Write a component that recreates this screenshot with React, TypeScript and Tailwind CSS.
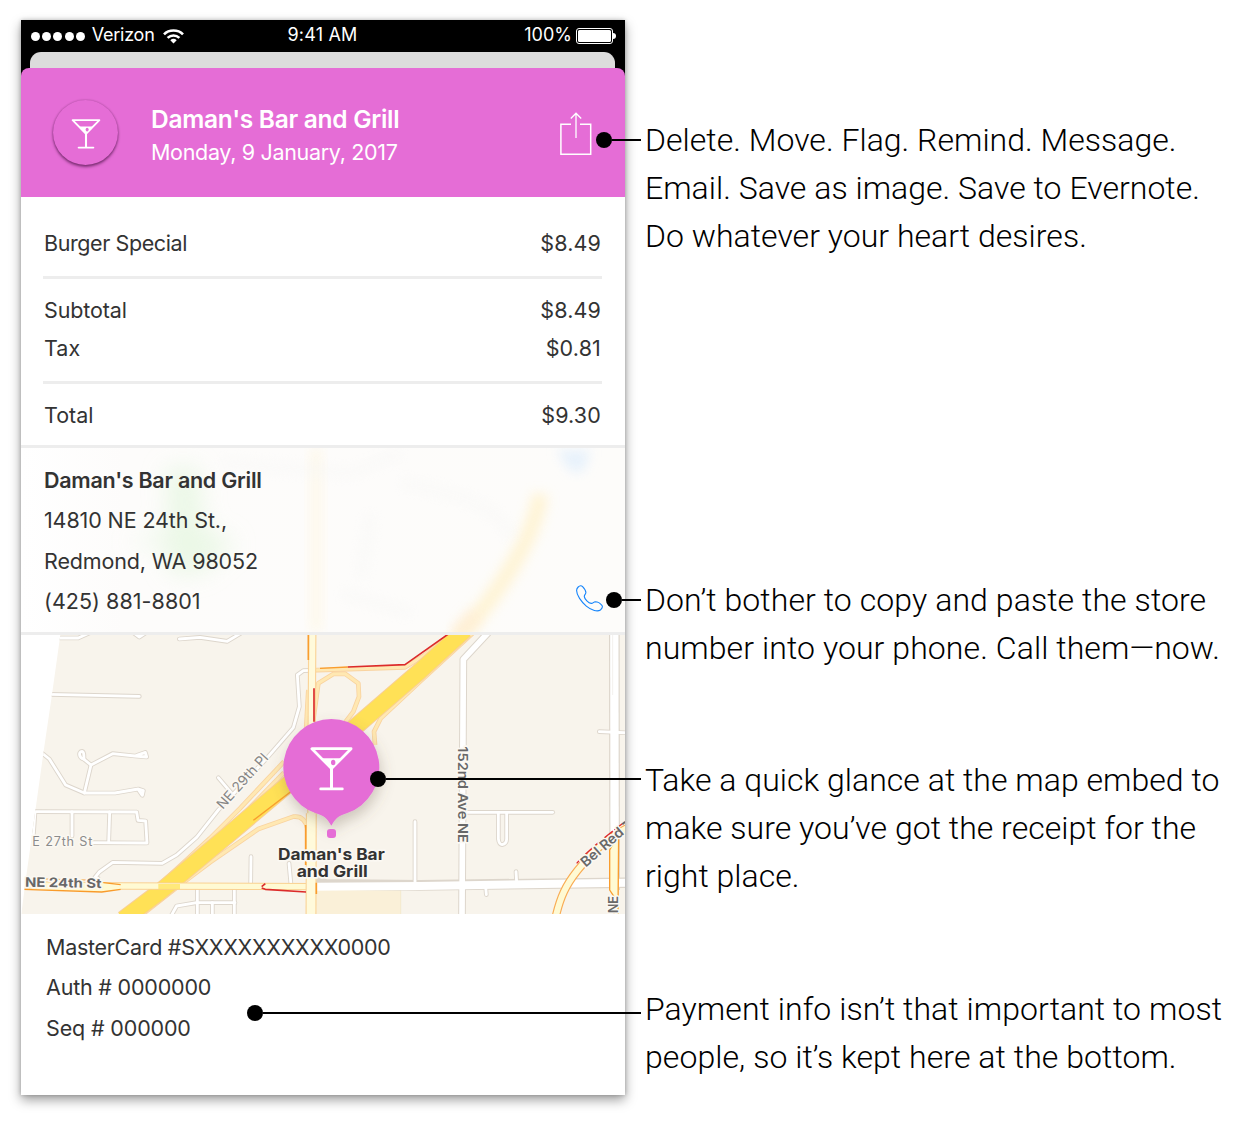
import React from 'react';

const minorRoads = [
  'M140,24 L205,24 L240,8',
  'M370,8 L388,21 L408,8',
  'M508,27 L570,22 L652,34 L695,8',
  'M120,193 L388,199',
  'M92,366 L118,387 L167,465 L223,489 L315,489 L385,477 L400,482 L397,496 L385,479',
  'M223,489 L243,405 L308,371 L375,378 L410,381 L406,367 L380,376',
  'M243,405 L221,387',
  'M221,387 C206,384 205,364 216,364 C224,366 221,378 222,387',
  'M70,545 L380,546 L384,571 L407,573 L411,639 L240,638',
  'M186,546 L186,618',
  'M299,546 L296,638',
  'M75,545 L70,615',
  'M264,745 L255,742 L268,726 L308,697 L457,700 L500,675 L560,622 L625,540 L770,385 L850,293 L868,230 L862,135 L880,122 L905,121',
  'M625,443 L665,490',
  'M482,860 L500,828 L560,818 L675,818',
  'M562,775 L562,860',
  'M607,818 L607,860',
  'M673,775 L673,860',
  'M723,680 L722,765',
  'M837,700 L843,765',
  'M1215,575 L1215,760',
  'M1768,305 L1860,309',
  'M1370,547 L1628,547',
  'M1465,547 L1465,626 Q1467,643 1476,644 Q1490,641 1490,626 L1490,547',
  'M1518,725 L1520,757',
  'M1427,770 L1429,794',
];

const ramps = [
  'M440,772 L600,625 L690,535 L822,395',
  'M440,782 L600,655 L822,428',
  'M395,855 L510,765 L600,697 L745,597 L850,560 Q884,556 892,595',
  'M1002,282 L1030,245 L1047,200 L1045,160 L1005,131 L970,132 L925,160 L908,285',
  'M1095,345 L1092,305 L1112,265 L1230,155 L1390,8',
  'M1020,305 L1230,112 L1345,8',
  'M895,180 L888,305',
];

function MartiniGlass({ className }: { className: string }) {
  return (
    <svg viewBox="0 0 126 130" className={className} aria-hidden="true">
      <path d="M5,5 H121 L63,64 Z" fill="none" stroke="white" strokeWidth="8" strokeLinejoin="round" />
      <path d="M32,33 H94 L63,66 Z" fill="white" />
      <ellipse cx="68" cy="46" rx="6.5" ry="8" fill="#e56dd6" />
      <path d="M63,60 V123" stroke="white" strokeWidth="9" />
      <path d="M31,124 H95" stroke="white" strokeWidth="8" strokeLinecap="round" />
    </svg>
  );
}

function MapView() {
  return (
    <svg viewBox="33 15 1812 837" preserveAspectRatio="none" className="block h-[279px] w-[604px] bg-white">
      <defs>
        <clipPath id="land">
          <path d="M151,15 L125,200 L100,370 L75,550 L45,765 L34,852 H1845 V15 Z" />
        </clipPath>
        <filter id="pinShadow" x="-50%" y="-50%" width="200%" height="200%">
          <feDropShadow dx="5" dy="20" stdDeviation="20" floodColor="#6b5a48" floodOpacity="0.3" />
        </filter>
      </defs>
      <g clipPath="url(#land)" fill="none" strokeLinejoin="round">
        <rect x="0" y="0" width="1900" height="900" fill="#f8f4ec" />
        <rect x="915" y="780" width="257" height="80" fill="#faf0d8" stroke="#f3e6c4" strokeWidth="2" />
        <g stroke="#ddd6cc" strokeWidth="14">
          {minorRoads.map((d) => <path key={d} d={d} strokeLinecap="round" />)}
          <path d="M1442,0 L1360,88 L1356,860" strokeWidth="23" />
          <path d="M1813,8 L1814,780" strokeWidth="32" />
          <path d="M920,748 L945,763 L1230,766 L1860,758" strokeWidth="32" />
        </g>
        <g stroke="white" strokeWidth="8.5">
          {minorRoads.map((d) => <path key={d} d={d} strokeLinecap="round" />)}
          <path d="M1442,0 L1360,88 L1356,860" strokeWidth="17" />
          <path d="M1813,8 L1814,780" strokeWidth="25" />
          <path d="M920,770 L1230,768 L1860,758" strokeWidth="24" />
        </g>
        <path d="M1808,15 V195" stroke="#f3f1ee" strokeWidth="3" />

        <g stroke="#f9d3a0" strokeWidth="14">
          {ramps.map((d) => <path key={d} d={d} />)}
          <path d="M900,121 L1185,112 L1240,78 L1330,8" />
        </g>
        <g stroke="#ffe8b2" strokeWidth="9">
          {ramps.map((d) => <path key={d} d={d} />)}
          <path d="M900,121 L1185,112 L1240,78 L1330,8" />
        </g>

        <path d="M340,868 L450,785 L630,635 L840,458 L1025,300 L1230,123 L1365,0" stroke="#f9cf94" strokeWidth="53" />
        <path d="M340,868 L450,785 L630,635 L840,458 L1025,300 L1230,123 L1365,0" stroke="#ffe156" strokeWidth="47" />

        <path d="M30,765 L340,768 L920,770" stroke="#fad191" strokeWidth="22" />
        <path d="M30,765 L340,768 L920,770" stroke="#fffad3" strokeWidth="16" />
        <path d="M40,778 L275,786 L332,778 L332,762 L275,758" fill="#fffad3" />
        <path d="M40,778 L275,786 L332,778 M332,764 L280,758" stroke="#f99b2b" strokeWidth="4" />
        <path d="M60,746 L230,750" stroke="#f9a84a" strokeWidth="3" />
        <path d="M445,770 L510,770" stroke="#ffe156" strokeWidth="16" opacity="0.7" />

        <path d="M907,0 L905,300 L903,860" stroke="#fad49a" strokeWidth="25" />
        <path d="M904,550 L903,860" stroke="#fad49a" strokeWidth="33" />
        <path d="M907,0 L905,300 L903,860" stroke="#fffadb" strokeWidth="18" />
        <path d="M904,550 L903,860" stroke="#fffadb" strokeWidth="26" />
        <path d="M895,15 V90 M887,585 V705 M919,758 V792" stroke="#f99d2e" strokeWidth="5" />
        <path d="M730,571 L842,485" stroke="#f99d2e" strokeWidth="4" />
        <path d="M912,175 V275 M1013,111 L1185,104 L1318,10 M755,774 L766,778 L888,786 M755,770 L766,761" stroke="#dc2b2b" strokeWidth="5" />
        <path d="M930,115 L1013,111" stroke="#f99d2e" strokeWidth="4" />

        <path d="M1799,660 L1826,610 L1824,855 L1812,855 L1812,800 L1799,780 Z" fill="#fffad3" stroke="#f99d2e" strokeWidth="4" />
        <path d="M1635,870 C1650,800 1668,765 1702,722 C1740,675 1780,630 1860,590" stroke="#f9ac54" strokeWidth="25" />
        <path d="M1635,870 C1650,800 1668,765 1702,722 C1740,675 1780,630 1860,590" stroke="#fffad3" strokeWidth="18" />
        <path d="M1700,700 C1730,665 1780,625 1845,575" stroke="#dc2b2b" strokeWidth="4" strokeDasharray="32 6" />
      </g>

      <g className="font-['Inter',sans-serif]" stroke="#fbf8f2" strokeWidth="9" strokeLinejoin="round" paintOrder="stroke" fill="#686868">
        <text x="67" y="649" fontSize="38" fill="#8b8b8b" textLength="180">E 27th St</text>
        <text transform="translate(45 770) rotate(1)" fontSize="39" fontWeight="700" textLength="229" lengthAdjust="spacingAndGlyphs">NE 24th St</text>
        <text transform="translate(638 540) rotate(-48)" fontSize="41" fill="#858585" textLength="208" lengthAdjust="spacingAndGlyphs">NE 29th Pl</text>
        <text transform="translate(1345 349) rotate(90)" fontSize="40" fontWeight="600" textLength="290" lengthAdjust="spacingAndGlyphs">152nd Ave NE</text>
        <text transform="translate(1727 713) rotate(-41)" fontSize="42" fontWeight="600" textLength="155" lengthAdjust="spacingAndGlyphs">Bel Red</text>
        <text transform="translate(1824 850) rotate(-90)" fontSize="40" fontWeight="600" textLength="52">NE</text>
      </g>
      <path d="M1837,583 L1845,576" stroke="#686868" strokeWidth="6" />

      <g fill="#e56dd6">
        <path filter="url(#pinShadow)" d="M964,267 A145.500,145.500 0 0 1 1010,550 C985,558 978,564 964,587 C950,564 943,558 918,550 A145.500,145.500 0 0 1 964,267 Z" />
        <rect x="951" y="597" width="27" height="27" rx="9" />
      </g>
      <g className="font-['Inter',sans-serif]" fontWeight="700" fill="#333" stroke="#fbf8f2" strokeWidth="10" strokeLinejoin="round" paintOrder="stroke">
        <text x="804" y="689" fontSize="49" textLength="320" lengthAdjust="spacingAndGlyphs">Daman's Bar</text>
        <text x="860" y="742" fontSize="49" textLength="213" lengthAdjust="spacingAndGlyphs">and Grill</text>
      </g>
    </svg>
  );
}

function BlurredMap() {
  return (
    <svg viewBox="0 0 604 184" className="absolute inset-0 h-full w-full" aria-hidden="true">
      <defs>
        <filter id="soft" x="-50%" y="-50%" width="200%" height="200%"><feGaussianBlur stdDeviation="6" /></filter>
        <filter id="softer" x="-50%" y="-50%" width="200%" height="200%"><feGaussianBlur stdDeviation="12" /></filter>
        <linearGradient id="paper">
          <stop offset="0" stopColor="#fff" />
          <stop offset="0.17" stopColor="#fdfcfb" />
          <stop offset="1" stopColor="#fdfcfa" />
        </linearGradient>
      </defs>
      <rect width="604" height="184" fill="url(#paper)" />
      <path d="M145,20 H178 L182,80 L215,95 L180,125 H148 L146,98 L105,95 L148,82 Z" fill="#dcf4d5" opacity="0.55" filter="url(#softer)" />
      <path d="M289,0 H301 V184 H289 Z" fill="#fff6dd" opacity="0.5" filter="url(#soft)" />
      <path d="M519,46 C515,85 480,145 435,192" fill="none" stroke="#fff2cc" strokeWidth="16" opacity="0.8" filter="url(#soft)" />
      <path d="M455,165 L435,188" stroke="#ffead2" strokeWidth="16" opacity="0.5" filter="url(#soft)" />
      <path d="M535,2 H570 L562,24 L550,24 Z" fill="#e2effc" opacity="0.8" filter="url(#soft)" />
      <path d="M200,15 L330,25 L380,5 M380,35 C440,45 480,60 490,90 M350,65 L340,130 M320,145 L390,165" fill="none" stroke="#f6f6f5" strokeWidth="12" opacity="0.4" filter="url(#soft)" />
    </svg>
  );
}

function StatusBar() {
  return (
    <div className="grid h-8 grid-cols-3 items-center pl-[10px] pr-[9px] text-[18px] leading-[30px] text-white">
      <div className="flex items-center">
        <div className="flex gap-[2.200px]">
          {[0, 1, 2, 3, 4].map((i) => <span key={i} className="size-[9px] rounded-full bg-white" />)}
        </div>
        <span className="-mt-[2px] ml-[7px] text-[18px] tracking-[-0.250px]">Verizon</span>
        <svg viewBox="0 0 21 15" className="ml-[8px] h-[15px] w-[21px]" fill="none" stroke="white" strokeWidth="2.600">
          <path d="M1,5.300 C6,0.200 15,0.200 20,5.300" />
          <path d="M4.600,8.900 C8,5.700 13,5.700 16.400,8.900" />
          <path d="M7.300,11.200 Q10.500,8.300 13.700,11.200 L10.500,14.600 Z" fill="white" stroke="none" />
        </svg>
      </div>
      <div className="-mt-[2px] pr-[2px] text-center tracking-[0.200px]">9:41 AM</div>
      <div className="flex items-center justify-end">
        <span className="-mt-[2px]">100%</span>
        <div className="ml-[4px] h-[16px] w-[37px] rounded-[3px] border border-white p-px">
          <div className="h-full rounded-[1.500px] bg-white" />
        </div>
        <span className="h-[6px] w-[3px] rounded-r-full bg-white" />
      </div>
    </div>
  );
}

function Row({ label, value, tracking }: { label: string; value: string; tracking: string }) {
  return (
    <div className="flex h-[39px] items-center justify-between pl-[1px] pr-[1px]">
      <span className={tracking}>{label}</span>
      <span className="tracking-[0.150px]">{value}</span>
    </div>
  );
}

function Phone() {
  return (
    <main className="ml-[21px] mt-5 h-[1075px] w-[604px] shrink-0 bg-white font-['Inter',sans-serif] text-[21.500px] text-[#333] shadow-[0_0_4px_rgba(0,0,0,0.22),0_5px_11px_rgba(0,0,0,0.38)]">
      <div className="bg-black">
        <StatusBar />
        <div className="ml-[9px] mr-[10px] h-4 rounded-t-[11px] bg-[#dcdcdc]" />
        <header className="flex h-[129px] items-start rounded-t-[8px] bg-[#e56dd6] text-white">
          <div className="ml-8 mt-8 flex size-[65px] items-center justify-center rounded-full shadow-[0_2px_3px_rgba(50,0,45,0.55),0_0_2px_rgba(50,0,45,0.3)]">
            <MartiniGlass className="mt-[3px] h-[30px] w-[30px]" />
          </div>
          <div className="ml-[33px] mt-[34px]">
            <h1 className="text-[24.500px] font-semibold leading-[34px] tracking-[-0.280px]">Daman's Bar and Grill</h1>
            <p className="text-[21.500px] leading-[33px] tracking-[-0.320px]">Monday, 9 January, 2017</p>
          </div>
          <svg viewBox="0 0 32 44" className="ml-auto mr-[33px] mt-[44px] h-[44px] w-[32px]" fill="none" stroke="white" strokeWidth="1.500">
            <path d="M11,12.200 H0.900 V42.200 H30.700 V12.200 H20" />
            <path d="M16,26 V1.200 M10.800,6.500 L16,1.200 L21.200,6.500" strokeWidth="1.300" />
          </svg>
        </header>
      </div>

      <section className="pl-[22px] pr-[23px]">
        <div className="flex h-[79px] flex-col justify-end pb-[13px]"><Row label="Burger Special" value="$8.49" tracking="tracking-[-0.400px]" /></div>
        <div className="h-[3px] bg-[#ededed]" />
        <div className="h-[102px] pt-[12px]">
          <Row label="Subtotal" value="$8.49" tracking="tracking-[-0.120px]" />
          <div className="-mt-px"><Row label="Tax" value="$0.81" tracking="tracking-[0px]" /></div>
        </div>
        <div className="h-[3px] bg-[#ededed]" />
        <div className="h-[61px] pt-[12px]"><Row label="Total" value="$9.30" tracking="tracking-[0px]" /></div>
      </section>

      <section className="relative h-[190px] border-y-[3px] border-[#ededed]">
        <BlurredMap />
        <div className="relative flex items-end justify-between pl-[23px] pr-[22px] pt-[12px]">
          <address className="not-italic leading-[40.300px]">
            <h2 className="font-semibold tracking-[-0.260px]">Daman's Bar and Grill</h2>
            <p className="tracking-[-0.120px]">14810 NE 24th St.,</p>
            <p className="tracking-[-0.140px]">Redmond, WA 98052</p>
            <p className="tracking-[0.050px]">(425) 881-8801</p>
          </address>
          <svg viewBox="0 0 27 27" className="mb-[9px] h-[27px] w-[27px]" fill="none" stroke="#1484fb" strokeWidth="1.100" strokeLinejoin="round">
            <path d="M2.200,2 C3.800,0.400 5.400,0.300 6.600,1.600 C8.400,3.500 9.900,5.700 9.900,7.500 C9.900,9.100 8.100,9.800 8.300,11.600 C8.600,14.100 12.500,18.100 15.200,18.400 C17,18.600 17.500,16.800 19.300,16.700 C21.500,16.700 24.500,18.500 25.900,20.300 C27,21.900 25.800,23.800 24.400,25 C21.500,26.800 15.800,25.700 10.300,21.100 C5.200,16.700 0.600,10.100 0.600,5.500 C0.600,4.100 1.300,2.900 2.200,2 Z" />
          </svg>
        </div>
      </section>

      <MapView />

      <section className="pl-[25px] pt-[13px] leading-[40.300px]">
        <p className="tracking-[-0.290px]">MasterCard #SXXXXXXXXXX0000</p>
        <p className="tracking-[-0.200px]">Auth # 0000000</p>
        <p className="tracking-[-0.150px]">Seq # 000000</p>
      </section>
    </main>
  );
}

function Pointer({ className }: { className: string }) {
  return (
    <div className={`absolute flex h-4 items-center ${className}`} aria-hidden="true">
      <span className="size-4 rounded-full bg-black" />
      <span className="h-[2px] flex-1 bg-black" />
    </div>
  );
}

export default function App() {
  return (
    <div className="relative flex h-[1121px] w-[1249px] overflow-hidden bg-white">
      <Phone />
      <aside className="ml-[20px] mt-[116px] flex flex-col whitespace-nowrap font-['Roboto',sans-serif] text-[32px] font-light leading-[48px] text-black">
        <p className="tracking-[0.020px]">
          Delete. Move. Flag. Remind. Message.<br />
          Email. Save as image. Save to Evernote.<br />
          Do whatever your heart desires.
        </p>
        <p className="mt-[316px] tracking-[0.080px]">
          Don’t bother to copy and paste the store<br />
          number into your phone. Call them—now.
        </p>
        <p className="mt-[84px] tracking-[0.020px]">
          Take a quick glance at the map embed to<br />
          make sure you’ve got the receipt for the<br />
          right place.
        </p>
        <p className="mt-[85px] tracking-[0.060px]">
          Payment info isn’t that important to most<br />
          people, so it’s kept here at the bottom.
        </p>
      </aside>

      <div className="absolute left-[310px] top-[747px]"><MartiniGlass className="h-[44px] w-[43px]" /></div>
      <Pointer className="left-[596px] top-[132px] w-[45px]" />
      <Pointer className="left-[606px] top-[592px] w-[35px]" />
      <Pointer className="left-[370px] top-[771px] w-[271px]" />
      <Pointer className="left-[247px] top-[1005px] w-[394px]" />
    </div>
  );
}
